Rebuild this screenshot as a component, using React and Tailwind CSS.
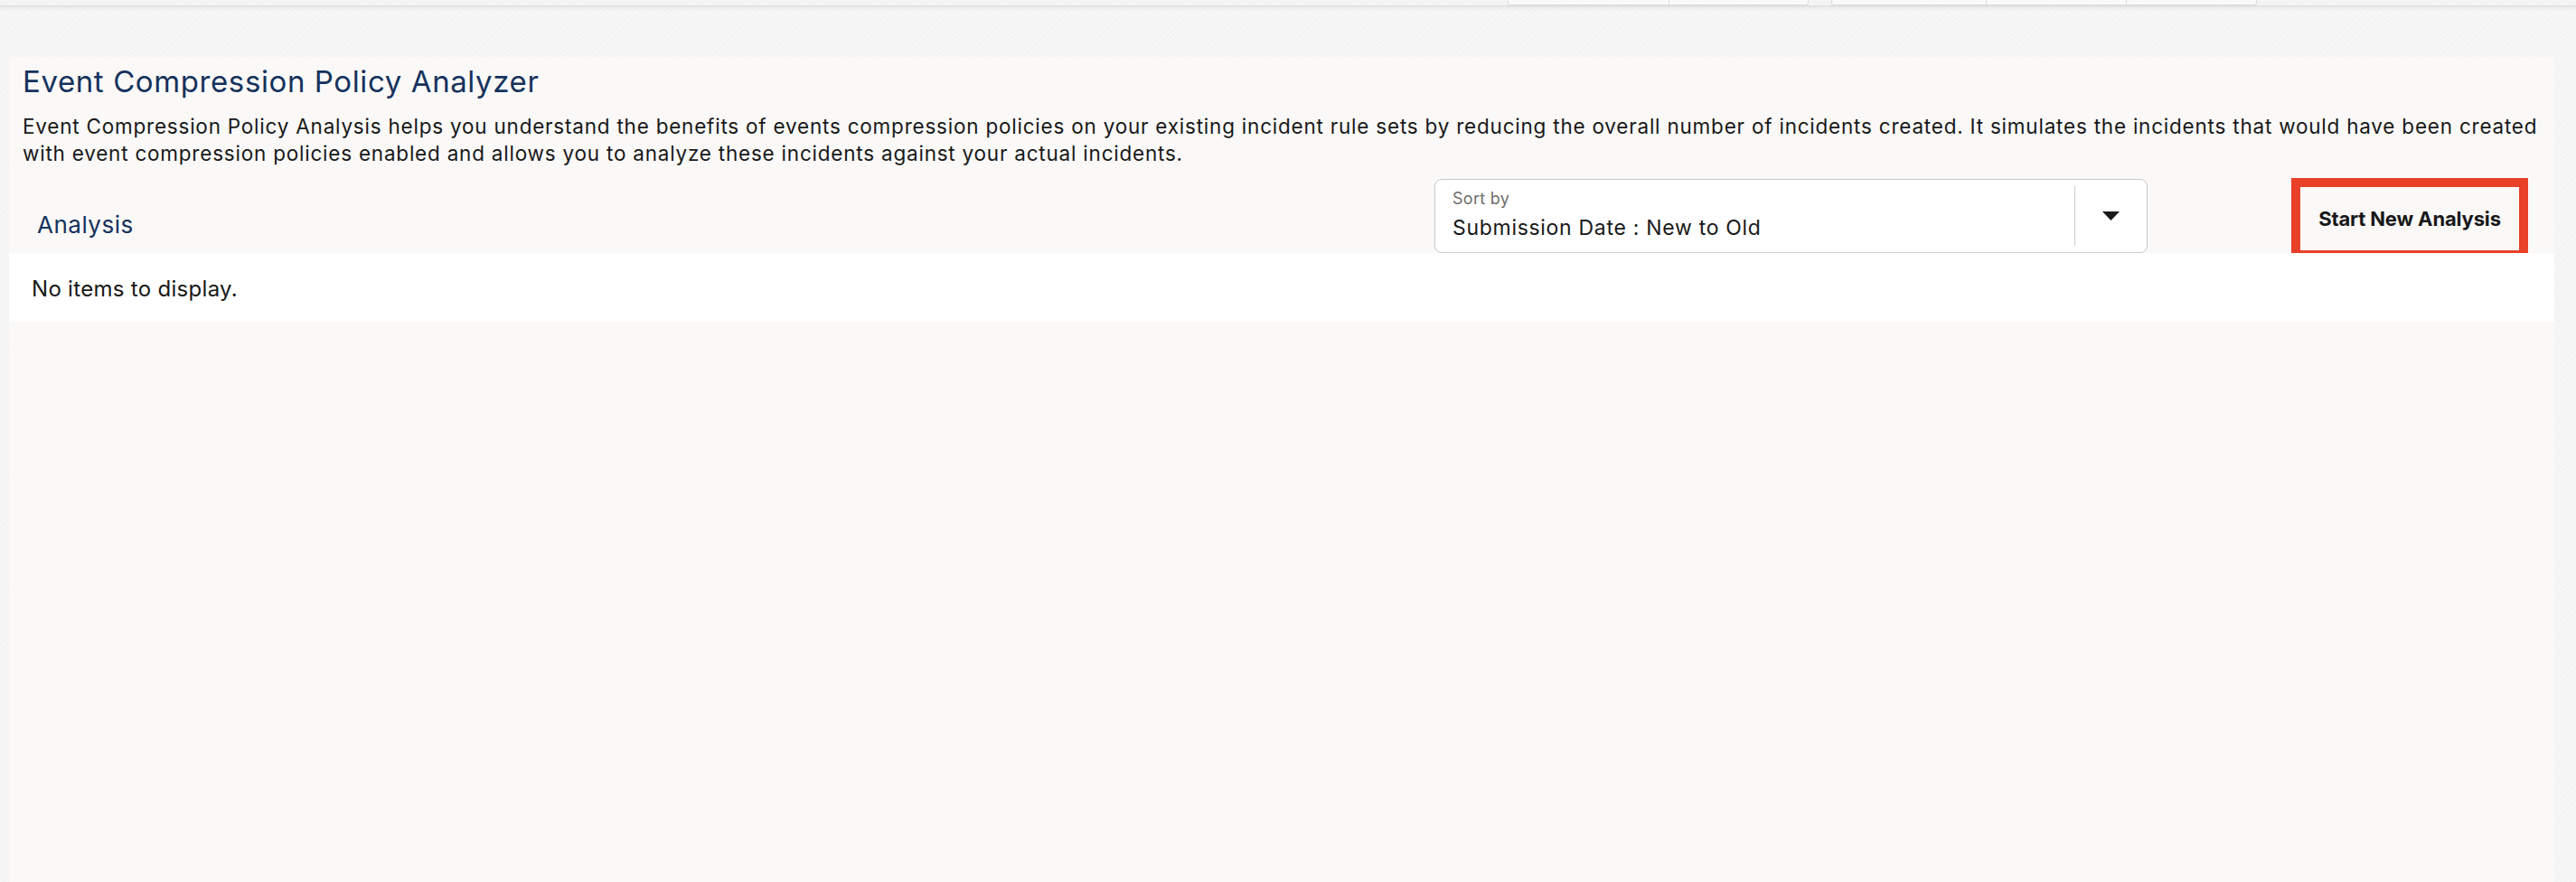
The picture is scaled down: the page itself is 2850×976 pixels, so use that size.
import React from 'react';

const FONT = "font-['Inter','Noto_Sans',sans-serif]";

function TopBar() {
  return (
    <div className="relative z-10 flex h-[7px] bg-[#f4f4f4] border-b border-[#dcdfdf] shadow-[0_2px_4px_rgba(0,0,0,0.07)]">
      <div className="w-[1668px] shrink-0" />
      <div className="w-[179px] h-[6px] bg-[#fafafa] border border-t-0 border-[#dcdcdc] rounded-bl-[3px]" />
      <div className="w-[154px] h-[6px] bg-[#fafafa] border border-t-0 border-l-0 border-[#dcdcdc] rounded-br-[3px]" />
      <div className="w-[25px] shrink-0" />
      <div className="w-[172px] h-[6px] bg-[#fafafa] border border-t-0 border-[#dcdcdc] rounded-bl-[3px]" />
      <div className="w-[155px] h-[6px] bg-[#fafafa] border border-t-0 border-l-0 border-[#dcdcdc]" />
      <div className="w-[144px] h-[6px] bg-[#fafafa] border border-t-0 border-l-0 border-[#dcdcdc] rounded-br-[3px]" />
    </div>
  );
}

function SortSelect() {
  return (
    <div className="flex w-[789px] h-[82px] bg-white border border-[#c9c9c9] rounded-[8px]">
      <div className="flex-1 pl-[19px] pt-[10px]">
        <div className="text-[18px] leading-[22px] tracking-[0.3px] text-[#706e6b]">Sort by</div>
        <div className="mt-[7px] text-[23px] leading-[28px] tracking-[0.7px] text-[#181818]">Submission Date : New to Old</div>
      </div>
      <div className="w-px my-[7px] bg-[#c9c9c9]" />
      <div className="w-[79px] flex items-center justify-center">
        <svg width="19" height="10" viewBox="0 0 19 10">
          <path d="M0 0 L19 0 L9.5 10 Z" fill="#181818" />
        </svg>
      </div>
    </div>
  );
}

export default function App() {
  return (
    <div className={`${FONT} h-screen flex flex-col bg-[repeating-linear-gradient(135deg,#f3f3f3_0px,#f3f3f3_2px,#f7f7f7_2px,#f7f7f7_4px)]`}>
      <TopBar />
      <div className="flex-1 flex pt-[56px] pl-[10px] pr-[24px]">
        <div className="flex-1 flex flex-col bg-[#faf9f8]">
          <div className="pl-[15px] pt-[7px]">
            <h1 className="text-[33px] leading-[40px] tracking-[0.6px] text-[#16325c]">Event Compression Policy Analyzer</h1>
            <p className="mt-[15px] text-[22.5px] leading-[30px] tracking-[0.78px] text-[#181818]">
              Event Compression Policy Analysis helps you understand the benefits of events compression policies on your existing incident rule sets by reducing the overall number of incidents created. It simulates the incidents that would have been created with event compression policies enabled and allows you to analyze these incidents against your actual incidents.
            </p>
          </div>

          <div className="mt-[13px] flex items-end pl-[31px] pr-[39px]">
            <h2 className="flex-1 mb-[15px] text-[26px] leading-[32px] tracking-[0.5px] text-[#16325c]">Analysis</h2>
            <SortSelect />
            <button className="ml-[169px] mb-[3px] w-[242px] h-[70px] outline-[10px] outline-solid outline-[#e9402a] text-[22px] font-bold tracking-[-0.15px] text-[#181818]">
              Start New Analysis
            </button>
          </div>

          <div className="h-[76px] flex items-center pt-[4px] pl-[25px] bg-white">
            <span className="text-[24px] tracking-[0.3px] text-[#181818]">No items to display.</span>
          </div>
        </div>
      </div>
    </div>
  );
}
